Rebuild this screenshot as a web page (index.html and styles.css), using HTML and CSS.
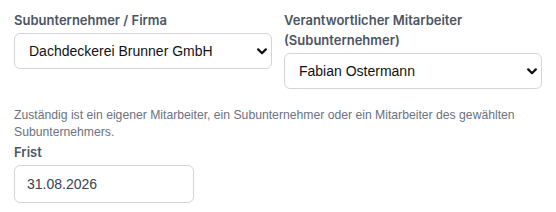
FILE: index.html
```html
<!DOCTYPE html>
<html>
<head>
    <link rel="stylesheet" href="styles.css">
</head>
<body>
    <div class="form">
        <div class="row">
            <div class="form-group">
                <label for="firma">Subunternehmer / Firma</label>
                <div class="select-wrap">
                    <select id="firma">
                        <option>Dachdeckerei Brunner GmbH</option>
                    </select>
                    <svg class="chevron" width="10" height="7" viewBox="0 0 10 7"><path d="M1.2 1.4 L5 5.2 L8.8 1.4" fill="none" stroke="#111" stroke-width="2.2" stroke-linecap="round" stroke-linejoin="round"/></svg>
                </div>
            </div>
            <div class="form-group">
                <label for="mitarbeiter">Verantwortlicher Mitarbeiter (Subunternehmer)</label>
                <div class="select-wrap">
                    <select id="mitarbeiter">
                        <option>Fabian Ostermann</option>
                    </select>
                    <svg class="chevron" width="10" height="7" viewBox="0 0 10 7"><path d="M1.2 1.4 L5 5.2 L8.8 1.4" fill="none" stroke="#111" stroke-width="2.2" stroke-linecap="round" stroke-linejoin="round"/></svg>
                </div>
            </div>
        </div>
        <p class="help">Zuständig ist ein eigener Mitarbeiter, ein Subunternehmer oder ein Mitarbeiter des gewählten Subunternehmers.</p>
        <div class="form-group">
            <label for="frist">Frist</label>
            <input type="text" id="frist" value="31.08.2026">
        </div>
    </div>
</body>
</html>
```
FILE: styles.css
```css
body {
    margin: 0;
    background-color: white;
    font-family: "Liberation Sans", Arial, sans-serif;
}
.form {
    padding: 10px 14px;
}
.row {
    display: grid;
    grid-template-columns: 1fr 1fr;
    column-gap: 12px;
}
label {
    display: block;
    font-family: Inter, "Liberation Sans", sans-serif;
    font-weight: 600;
    font-size: 13px;
    line-height: 20px;
    color: #4b5563;
    margin-bottom: 3px;
}
.select-wrap {
    position: relative;
}
select {
    -webkit-appearance: none;
    appearance: none;
    width: 100%;
    height: 36px;
    padding: 0 30px 0 14px;
    border: 1px solid #d1d5db;
    border-radius: 6px;
    background-color: white;
    font-family: "Liberation Sans", Arial, sans-serif;
    font-size: 14px;
    color: #111;
}
.chevron {
    position: absolute;
    right: 5px;
    top: 15px;
    pointer-events: none;
}
.help {
    margin: 18px 0 1px;
    font-size: 12.2px;
    line-height: 17px;
    color: #6b7280;
}
input[type="text"] {
    box-sizing: border-box;
    width: 180px;
    height: 38px;
    padding: 0 12px;
    border: 1px solid #d1d5db;
    border-radius: 6px;
    font-family: "Liberation Sans", Arial, sans-serif;
    font-size: 14px;
    color: #374151;
}
```
